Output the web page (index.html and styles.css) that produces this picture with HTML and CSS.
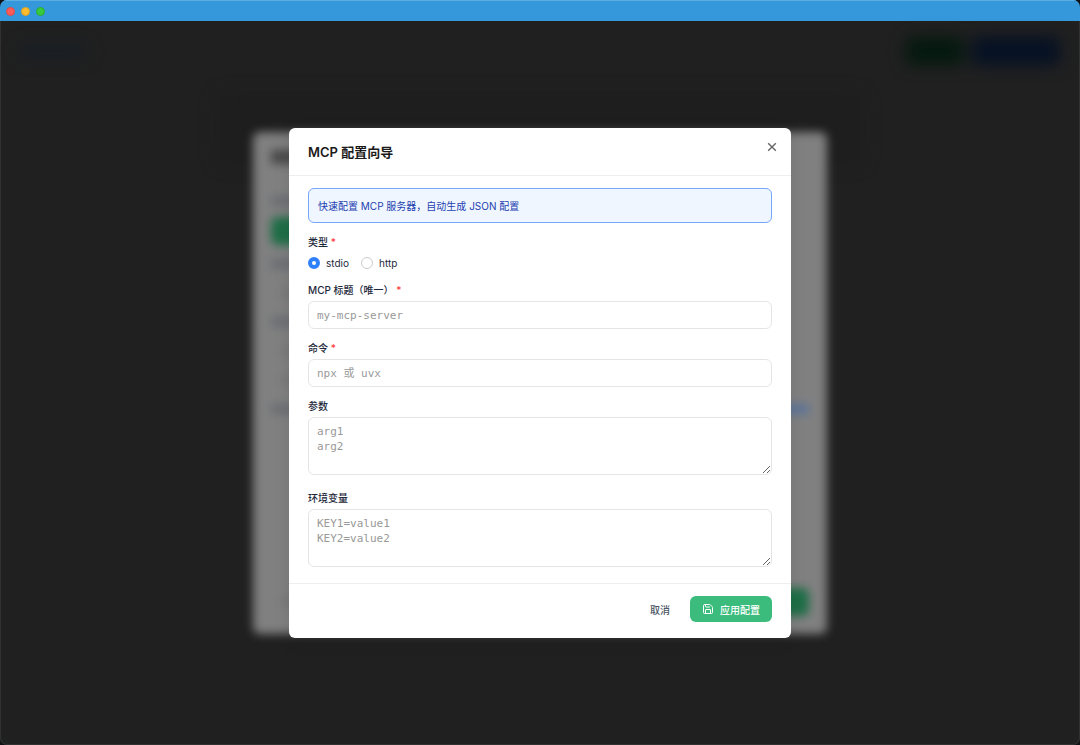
FILE: index.html
```html
<!DOCTYPE html>
<html lang="zh-CN">
<head>
<meta charset="UTF-8" />
<meta name="viewport" content="width=device-width, initial-scale=1" />
<title>MCP 配置向导</title>
<link rel="stylesheet" href="styles.css">
</head>
<body>
<div class="window">
  <header class="titlebar">
    <span class="dot dot-close"></span>
    <span class="dot dot-min"></span>
    <span class="dot dot-max"></span>
  </header>

  <div class="stage">
    <!-- Dimmed page under the dialogs -->
    <div class="page" aria-hidden="true">
      <div class="page-bar">
        <span class="page-logo"></span>
        <span class="page-btn page-btn-green"></span>
        <span class="page-btn page-btn-blue"></span>
      </div>
      <div class="page-card"></div>
    </div>

    <!-- Parent dialog, blurred by the wizard -->
    <div class="layer" aria-hidden="true">
      <div class="parent">
        <span class="smudge smudge-title"></span>
        <span class="smudge"></span>
        <span class="parent-btn"></span>
        <div class="parent-lines">
          <span class="smudge"></span>
          <span class="smudge smudge-light"></span>
          <span class="smudge"></span>
          <span class="smudge smudge-light"></span>
          <span class="smudge smudge-light"></span>
        </div>
        <div class="parent-row">
          <span class="smudge"></span>
          <span class="smudge smudge-link"></span>
        </div>
        <div class="parent-row parent-foot">
          <span class="smudge smudge-light"></span>
          <span class="parent-btn"></span>
        </div>
      </div>
    </div>

    <div class="layer layer-top">
      <form class="modal" role="dialog" aria-labelledby="modal-title">
        <div class="modal-header">
          <h2 id="modal-title">MCP 配置向导</h2>
          <button type="button" class="close" aria-label="关闭">
            <svg width="10" height="10" viewBox="0 0 10 10" fill="none" stroke="currentColor" stroke-width="1.4"><path d="M1.2 1.2l7.6 7.6M8.8 1.2L1.2 8.8"/></svg>
          </button>
        </div>

        <div class="modal-body">
          <p class="info">快速配置 MCP 服务器，自动生成 JSON 配置</p>

          <fieldset>
            <legend>类型 <span class="required">*</span></legend>
            <div class="radios">
              <label><input type="radio" name="type" value="stdio" checked>stdio</label>
              <label><input type="radio" name="type" value="http">http</label>
            </div>
          </fieldset>

          <div class="field">
            <label for="mcp-title">MCP 标题（唯一） <span class="required">*</span></label>
            <input type="text" id="mcp-title" placeholder="my-mcp-server">
          </div>

          <div class="field">
            <label for="mcp-command">命令 <span class="required">*</span></label>
            <input type="text" id="mcp-command" placeholder="npx 或 uvx">
          </div>

          <div class="field field-area">
            <label for="mcp-args">参数</label>
            <textarea id="mcp-args" rows="3" placeholder="arg1&#10;arg2"></textarea>
          </div>

          <div class="field field-area">
            <label for="mcp-env">环境变量</label>
            <textarea id="mcp-env" rows="3" placeholder="KEY1=value1&#10;KEY2=value2"></textarea>
          </div>
        </div>

        <div class="modal-footer">
          <button type="button" class="btn btn-cancel">取消</button>
          <button type="submit" class="btn btn-primary">
            <svg width="12" height="12" viewBox="0 0 24 24" fill="none" stroke="currentColor" stroke-width="2" stroke-linecap="round" stroke-linejoin="round"><path d="M15.2 3a2 2 0 0 1 1.4.6l3.8 3.8a2 2 0 0 1 .6 1.4V19a2 2 0 0 1-2 2H5a2 2 0 0 1-2-2V5a2 2 0 0 1 2-2z"/><path d="M17 21v-7a1 1 0 0 0-1-1H8a1 1 0 0 0-1 1v7"/><path d="M7 3v4a1 1 0 0 0 1 1h7"/></svg>
            应用配置
          </button>
        </div>
      </form>
    </div>
  </div>
</div>
</body>
</html>
```

FILE: styles.css
```css
:root {
  --green: #3bbc7d;
  --blue: #2f80fb;
  --border: #e5e5e5;
  --text: #1e293b;
  --font: Inter, "Noto Sans CJK SC", sans-serif;
  --mono: "DejaVu Sans Mono", "Noto Sans CJK SC", monospace;
}

* {
  box-sizing: border-box;
}

body {
  margin: 0;
  background: #0f1114;
  font-family: var(--font);
  font-size: 10px;
  line-height: 14px;
  color: var(--text);
}

.window {
  display: flex;
  flex-direction: column;
  min-height: 100vh;
  border-radius: 7px;
  overflow: hidden;
  background: #202020;
  box-shadow: inset 0 0 0 1px #303232;
}

.titlebar {
  display: flex;
  align-items: center;
  gap: 6px;
  height: 21px;
  padding: 0 6px;
  background: #3498db;
  border-top: 1px solid #5aaee3;
}

.dot {
  width: 9px;
  height: 9px;
  border-radius: 50%;
}

.dot-close {
  background: #fc5b57;
  border: 1px solid #dd4a48;
}

.dot-min {
  background: #fdbc2e;
  border: 1px solid #dfa023;
}

.dot-max {
  background: #37c93f;
  border: 1px solid #2aac30;
}

.stage {
  flex: 1;
  display: grid;
}

.page,
.layer {
  grid-area: 1 / 1;
}

.layer {
  display: flex;
  align-items: center;
  justify-content: center;
}

.layer-top {
  z-index: 1;
}

/* Page */
.page {
  filter: blur(8px);
}

.page-bar {
  display: flex;
  align-items: center;
  gap: 8px;
  padding: 16px 20px;
}

.page-logo {
  width: 66px;
  height: 14px;
  margin-right: auto;
  background: #181e25;
}

.page-btn {
  height: 28px;
  border-radius: 6px;
}

.page-btn-green {
  width: 58px;
  background: #04190f;
}

.page-btn-blue {
  width: 88px;
  background: #051124;
}

.page-card {
  width: 60%;
  height: 72px;
  margin: 12px auto;
  border-radius: 12px;
  background: #1e1e1e;
}

/* Parent dialog */
.parent {
  display: flex;
  flex-direction: column;
  align-items: flex-start;
  width: 574px;
  min-height: 502px;
  padding: 18px;
  border-radius: 7px;
  background: #808080;
  filter: blur(5px);
}

.smudge {
  width: 70px;
  height: 10px;
  margin-bottom: 19px;
  background: #6a6d72;
}

.smudge-title {
  height: 14px;
  margin-bottom: 32px;
  background: #484848;
}

.smudge-light {
  margin-left: 10px;
  background: #787878;
}

.smudge-link {
  width: 34px;
  background: #5c7499;
}

.parent-btn {
  width: 70px;
  height: 28px;
  margin-top: -8px;
  border-radius: 6px;
  background: #1e6e47;
}

.parent-lines {
  display: flex;
  flex-direction: column;
  padding-top: 14px;
}

.parent-row {
  display: flex;
  justify-content: space-between;
  width: 100%;
}

.parent-foot {
  align-items: center;
  margin-top: auto;
}

.parent-foot .smudge,
.parent-foot .parent-btn {
  margin-top: 0;
  margin-bottom: 0;
}

/* Wizard */
.modal {
  width: 502px;
  max-width: 100%;
  border-radius: 6px;
  background: #fff;
  box-shadow: 0 4px 16px rgb(0 0 0 / 0.1);
}

.modal-header {
  display: flex;
  align-items: flex-start;
  justify-content: space-between;
  padding: 14px 10px 13px 19px;
  border-bottom: 1px solid #eee;
}

h2 {
  margin: 0;
  font-size: 13px;
  line-height: 20px;
  font-weight: 600;
  color: #1a1a1a;
}

.close {
  display: flex;
  padding: 0 4px;
  border: none;
  background: none;
  color: #666;
  cursor: pointer;
}

.modal-body {
  padding: 12px 19px 16px;
}

.info {
  margin: 0 0 12px;
  padding: 10px 9px 9px;
  border: 1px solid #74a8f8;
  border-radius: 6px;
  background: #eff6ff;
  color: #1e40af;
}

fieldset {
  margin: 0 0 10px;
  padding: 0;
  border: none;
}

legend {
  padding: 0;
  margin-bottom: 4px;
  font-weight: 500;
}

.required {
  color: #ff3b40;
}

.radios {
  display: flex;
  gap: 12px;
}

.radios label {
  display: flex;
  align-items: center;
  gap: 6px;
  height: 20px;
}

input[type="radio"] {
  appearance: none;
  width: 12px;
  height: 12px;
  margin: 0;
  border: 1px solid #ccc;
  border-radius: 50%;
  background: #fff;
}

input[type="radio"]:checked {
  border: 4px solid var(--blue);
}

.field {
  display: flex;
  flex-direction: column;
  gap: 4px;
  margin-bottom: 12px;
  font-weight: 500;
}

.field-area {
  margin-bottom: 16px;
}

.field:last-child {
  margin-bottom: 0;
}

input[type="text"],
textarea {
  display: block;
  width: 100%;
  padding: 6px 8px;
  border: 1px solid var(--border);
  border-radius: 6px;
  background: #fff;
  font-family: var(--mono);
  font-size: 11px;
  line-height: 15px;
  color: var(--text);
}

input[type="text"] {
  height: 28px;
}

textarea {
  height: 58px;
  resize: vertical;
}

::placeholder {
  color: #999;
}

input:focus,
textarea:focus {
  outline: none;
  border-color: var(--blue);
}

.modal-footer {
  display: flex;
  justify-content: flex-end;
  gap: 8px;
  padding: 12px 19px 16px;
  border-top: 1px solid #eee;
}

.btn {
  display: flex;
  align-items: center;
  gap: 6px;
  height: 26px;
  padding: 0 12px;
  border: none;
  border-radius: 6px;
  font-family: var(--font);
  font-size: 10px;
  font-weight: 500;
  cursor: pointer;
}

.btn-cancel {
  background: none;
  color: #4b5563;
}

.btn-primary {
  background: var(--green);
  color: #fff;
}
```
